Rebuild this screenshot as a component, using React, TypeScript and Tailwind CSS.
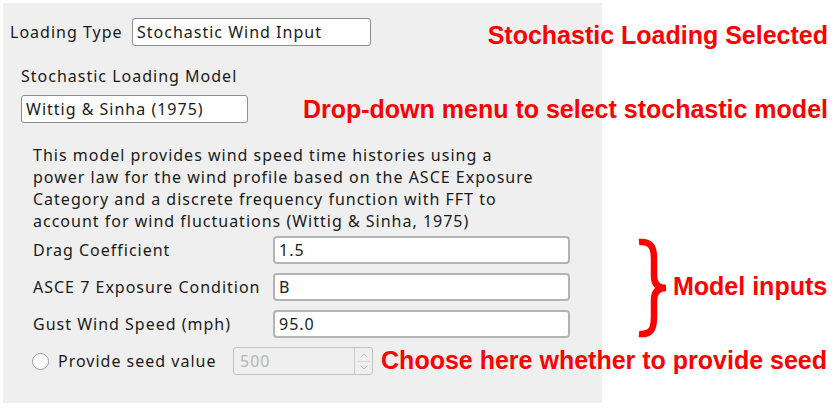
import React from "react";

const ui = { fontFamily: '"Noto Sans", "Open Sans", sans-serif' };
const red = { fontFamily: '"Liberation Sans", Arial, sans-serif' };

function Field({ label, value }: { label: string; value: string }) {
  return (
    <div className="flex items-center h-[28px]">
      <span className="w-[240px] shrink-0">{label}</span>
      <div className="w-[297px] h-[28px] rounded-[4px] border-2 border-[#b3b3b3] bg-white px-[4px] flex items-center">
        {value}
      </div>
    </div>
  );
}

export default function App() {
  return (
    <div className="relative w-[837px] h-[408px] bg-white overflow-hidden">
      <div
        className="ml-[3px] mt-[3px] w-[599px] h-[400px] bg-[#efefef] text-[16px] leading-[22px] tracking-[1px] text-[#1a1a1a] flex flex-col"
        style={ui}
      >
        <div className="flex items-center pl-[7px] mt-[15px]">
          <span className="w-[122px] shrink-0">Loading Type</span>
          <div className="w-[239px] h-[28px] rounded-[3px] border border-[#8e8e8e] bg-white px-[4px] flex items-center">
            Stochastic Wind Input
          </div>
        </div>

        <div className="pl-[18px] mt-[19px]">Stochastic Loading Model</div>
        <div className="ml-[18px] mt-[8px] w-[227px] h-[28px] rounded-[3px] border border-[#8e8e8e] bg-white px-[4px] flex items-center">
          Wittig &amp; Sinha (1975)
        </div>

        <div className="pl-[30px] pr-[5px] mt-[21px]">
          This model provides wind speed time histories using a<br />
          power law for the wind profile based on the ASCE Exposure<br />
          Category and a discrete frequency function with FFT to<br />
          account for wind fluctuations (Wittig &amp; Sinha, 1975)
        </div>

        <div className="pl-[30px] mt-[4px] flex flex-col gap-[9px]">
          <Field label="Drag Coefficient" value="1.5" />
          <Field label="ASCE 7 Exposure Condition" value="B" />
          <Field label="Gust Wind Speed (mph)" value="95.0" />
        </div>

        <div className="flex items-center pl-[29px] mt-[9px]">
          <span className="w-[17px] h-[17px] rounded-full border border-[#9a9a9a] bg-white shrink-0" />
          <span className="ml-[9px] w-[175px] shrink-0">Provide seed value</span>
          <div className="w-[140px] h-[28px] rounded-[3px] border border-[#c2c2c2] bg-[#efefef] flex">
            <span className="flex-1 flex items-center px-[6px] text-[#b5b5b5]">500</span>
            <div className="w-[18px] border-l border-[#c9c9c9] flex flex-col items-center justify-center gap-[3px]">
              <svg width="8" height="5" viewBox="0 0 8 5">
                <path d="M0.5 4.5 L4 1 L7.5 4.5" fill="none" stroke="#bdbdbd" strokeWidth="1" />
              </svg>
              <div className="w-[12px] h-px bg-[#d5d5d5]" />
              <svg width="8" height="5" viewBox="0 0 8 5">
                <path d="M0.5 0.5 L4 4 L7.5 0.5" fill="none" stroke="#bdbdbd" strokeWidth="1" />
              </svg>
            </div>
          </div>
        </div>
      </div>

      <div className="absolute right-[9px] top-[20px] text-[25px] leading-[30px] font-bold text-[#ff0000]" style={red}>
        Stochastic Loading Selected
      </div>
      <div className="absolute right-[9px] top-[94px] text-[25px] leading-[30px] font-bold text-[#ff0000]" style={red}>
        Drop-down menu to select stochastic model
      </div>
      <svg className="absolute left-[636px] top-[238px]" width="34" height="100" viewBox="0 0 34 100">
        <path
          d="M3 4 C15 3 18 9 18 21 L18 38 C18 46 22 50 30 50 C22 50 18 54 18 62 L18 79 C18 91 15 97 3 96"
          fill="none"
          stroke="#ff0000"
          strokeWidth="6.5"
        />
      </svg>
      <div className="absolute left-[673px] top-[271px] text-[25px] leading-[30px] font-bold text-[#ff0000]" style={red}>
        Model inputs
      </div>
      <div className="absolute right-[10px] top-[345px] text-[25px] leading-[30px] font-bold text-[#ff0000]" style={red}>
        Choose here whether to provide seed
      </div>
    </div>
  );
}
